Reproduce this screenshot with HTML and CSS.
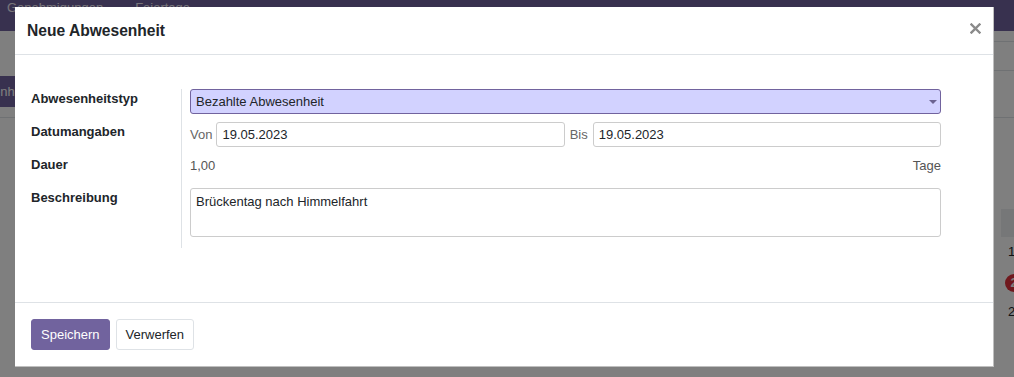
FILE: index.html
```html
<!DOCTYPE html>
<html lang="de">
<head>
<meta charset="utf-8">
<title>Neue Abwesenheit</title>
<link rel="stylesheet" href="styles.css">
</head>
<body>
<div class="page">
  <header class="navbar">
    <span class="nav-item">Genehmigungen</span>
    <span class="nav-item">Feiertage</span>
  </header>
  <div class="cp">
    <div class="cp-top"><div class="search"></div></div>
    <div class="cp-bottom"><button class="cp-btn">Abwesenheit</button></div>
  </div>
  <div class="content">
    <div class="cal-col">
      <div class="cal-head">T</div>
      <div class="cal-cell">1</div>
      <div class="cal-cell"><span class="badge">2</span></div>
      <div class="cal-cell">2</div>
    </div>
  </div>
</div>
<div class="backdrop"></div>
<div class="modal" role="dialog">
  <div class="modal-header">
    <h4 class="modal-title">Neue Abwesenheit</h4>
    <button class="close" aria-label="Schließen">
      <svg width="11" height="11" viewBox="0 0 11 11"><path d="M1.5 1.5 L9.5 9.5 M9.5 1.5 L1.5 9.5" stroke="#8a8a8a" stroke-width="2.4" stroke-linecap="square" fill="none"/></svg>
    </button>
  </div>
  <div class="modal-body">
    <div class="form-grid">
      <label class="lbl">Abwesenheitstyp</label>
      <div class="fld"><div class="select"><span>Bezahlte Abwesenheit</span><span class="caret"></span></div></div>
      <label class="lbl">Datumangaben</label>
      <div class="fld">
        <div class="dates">
          <span class="muted von">Von</span>
          <div class="input">19.05.2023</div>
          <span class="muted bis">Bis</span>
          <div class="input">19.05.2023</div>
        </div>
      </div>
      <label class="lbl">Dauer</label>
      <div class="fld"><div class="duration"><span>1,00</span><span>Tage</span></div></div>
      <label class="lbl">Beschreibung</label>
      <div class="fld last"><div class="textarea">Brückentag nach Himmelfahrt</div></div>
    </div>
  </div>
  <div class="modal-footer">
    <button class="btn btn-primary">Speichern</button>
    <button class="btn btn-secondary">Verwerfen</button>
  </div>
</div>
</body>
</html>
```
FILE: styles.css
```css
* { box-sizing: border-box; }
html, body {
  margin: 0;
  padding: 0;
}
body {
  width: 1014px;
  height: 377px;
  overflow: hidden;
  position: relative;
  font-family: "Liberation Sans", Arial, sans-serif;
  font-size: 13px;
  color: #212529;
  background: #fff;
}

/* underlying page */
.page { height: 377px; }
.navbar {
  height: 31px;
  background: #71639e;
  display: flex;
  align-items: flex-start;
  gap: 32px;
  padding-left: 7px;
}
.nav-item {
  color: #f0ecf7;
  line-height: 16px;
}
.cp {
  display: flex;
  flex-direction: column;
  height: 87px;
  border-bottom: 1px solid #dee2e6;
  padding-top: 10px;
}
.cp-top {
  display: flex;
  justify-content: flex-end;
}
.search {
  width: 260px;
  height: 30px;
  border: 1px solid #dee2e6;
  margin-right: -40px;
}
.cp-bottom {
  margin-top: 5px;
  display: flex;
}
.cp-btn {
  margin-left: -57px;
  height: 31px;
  padding: 0 10px;
  border: 1px solid #71639e;
  background: #71639e;
  color: #fff;
  font: inherit;
  border-radius: 3px;
}
.content {
  display: flex;
  justify-content: flex-end;
  padding-top: 91px;
}
.cal-col {
  width: 13px;
}
.cal-head {
  height: 28px;
  width: 30px;
  background: #eceef0;
  color: #eceef0;
  padding-left: 7px;
  line-height: 28px;
}
.cal-cell {
  height: 30px;
  line-height: 30px;
  padding-left: 7px;
  white-space: nowrap;
}
.cal-cell .badge {
  display: inline-block;
  margin-left: -3px;
  width: 18px;
  height: 18px;
  border-radius: 50%;
  background: #e0303a;
  color: #fff;
  font-weight: bold;
  line-height: 18px;
  text-align: center;
  vertical-align: middle;
}

.backdrop {
  position: absolute;
  inset: 0;
  background: rgba(0, 0, 0, 0.5);
}

/* modal */
.modal {
  position: absolute;
  top: 7px;
  left: 15px;
  width: 979px;
  background: #fff;
  border: 1px solid rgba(0, 0, 0, 0.25);
  border-top: 0;
  border-left: 0;
}
.modal-header {
  display: flex;
  justify-content: space-between;
  align-items: flex-start;
  padding: 14px 12px 14px 12px;
  border-bottom: 1px solid #dee2e6;
}
.modal-title {
  margin: 0;
  font-size: 15.6px;
  line-height: 19px;
  font-weight: bold;
  color: #212529;
}
.close {
  margin-top: 2px;
  padding: 0;
  border: 0;
  background: none;
  width: 11px;
  height: 11px;
  display: flex;
}
.modal-body {
  padding: 34px 52px 54px 16px;
}
.form-grid {
  display: grid;
  grid-template-columns: 150px 1fr;
}
.lbl {
  font-weight: bold;
  line-height: 20px;
  padding-bottom: 8px;
  color: #212529;
}
.fld {
  border-left: 1px solid #dee2e6;
  padding-left: 8px;
  padding-bottom: 8px;
}
.fld.last { padding-bottom: 11px; }

.select {
  height: 25px;
  border: 1px solid #71639e;
  border-radius: 3px;
  background: #d2d2ff;
  padding: 0 3px 0 5px;
  line-height: 23px;
  display: flex;
  align-items: center;
  justify-content: space-between;
}
.caret {
  width: 0;
  height: 0;
  border-left: 4px solid transparent;
  border-right: 4px solid transparent;
  border-top: 4px solid #6b6390;
  margin-top: 1px;
}
.dates {
  display: flex;
  align-items: center;
}
.muted { color: #666; }
.von { margin-right: 4px; }
.bis { margin: 0 5px; }
.input {
  flex: 1;
  height: 25px;
  border: 1px solid #ccc;
  border-radius: 3px;
  padding: 0 5px;
  line-height: 23px;
  color: #212529;
}
.duration {
  height: 25px;
  line-height: 22px;
  display: flex;
  justify-content: space-between;
  color: #555;
}
.textarea {
  height: 49px;
  border: 1px solid #ccc;
  border-radius: 3px;
  padding: 3px 5px;
  line-height: 20px;
}

.modal-footer {
  display: flex;
  gap: 6px;
  padding: 16px;
  border-top: 1px solid #dee2e6;
}
.btn {
  height: 31px;
  padding: 0 9px;
  font: inherit;
  border-radius: 3px;
  border: 1px solid;
}
.btn-primary {
  background: #71639e;
  border-color: #71639e;
  color: #fff;
}
.btn-secondary {
  background: #fff;
  border-color: #dee2e6;
  color: #212529;
}
```
